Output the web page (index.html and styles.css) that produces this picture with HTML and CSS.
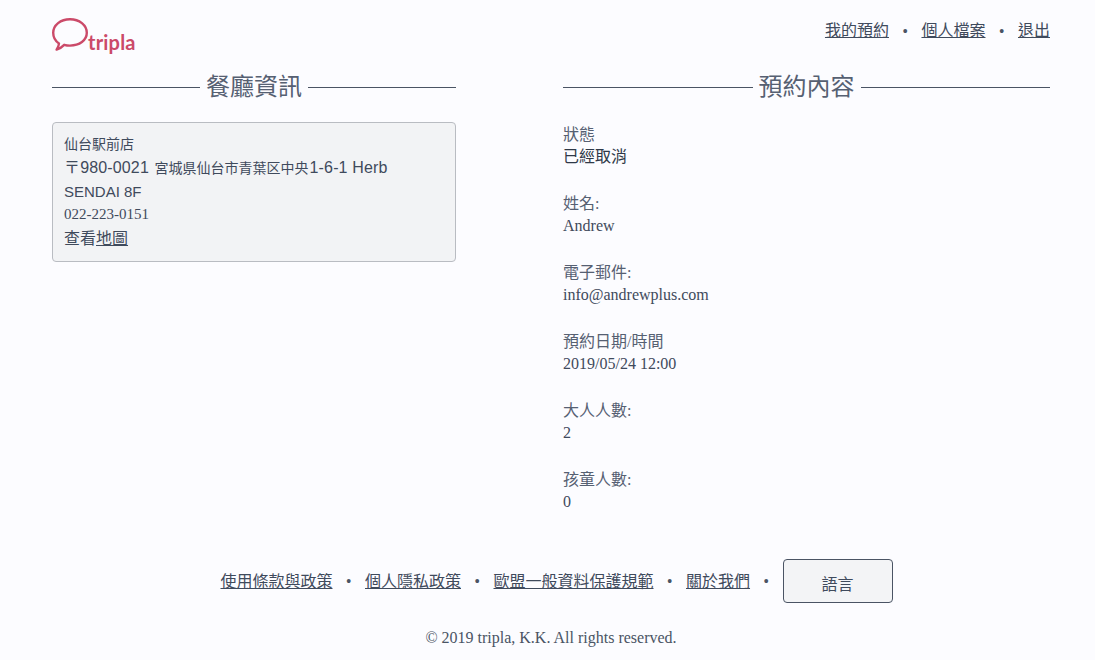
FILE: index.html
```html
<!DOCTYPE html>
<html lang="zh-Hant">
<head>
<meta charset="utf-8">
<title>tripla</title>
<link rel="stylesheet" href="styles.css">
</head>
<body>
<div class="page">
  <header class="header">
    <a class="logo" href="#">
      <svg class="logo-bubble" width="36" height="33" viewBox="0 0 36 33" aria-hidden="true">
        <path d="M7 25.5 C3.2 23 1.2 19.2 1.2 14.8 C1.2 7.2 8.6 1.2 18 1.2 C27.4 1.2 34.8 7.2 34.8 14.8 C34.8 22.4 27.4 27.6 18 27.6 C16 27.6 14 27.3 12.2 26.8 C10.2 28.9 7.6 30.6 4.6 31.6 C6 29.6 6.8 27.6 7 25.5 Z" fill="none" stroke="#cb4a69" stroke-width="2.4" stroke-linejoin="round"/>
      </svg>
      <span class="logo-text">tripla</span>
    </a>
    <nav class="nav">
      <a href="#">我的預約</a><span class="dot">•</span><a href="#">個人檔案</a><span class="dot">•</span><a href="#">退出</a>
    </nav>
  </header>

  <main class="columns">
    <section>
      <h2 class="title">餐廳資訊</h2>
      <div class="card">
        <div class="shop">仙台駅前店</div>
        <div class="address">〒980-0021 <span class="cjk">宮城県仙台市青葉区中央</span>1-6-1 Herb <span class="building">SENDAI 8F</span></div>
        <div class="phone">022-223-0151</div>
        <div class="map">查看<a href="#">地圖</a></div>
      </div>
    </section>
    <section>
      <h2 class="title">預約內容</h2>
      <dl class="details">
        <div class="item"><dt>狀態</dt><dd class="status">已經取消</dd></div>
        <div class="item"><dt>姓名:</dt><dd>Andrew</dd></div>
        <div class="item"><dt>電子郵件:</dt><dd>info@andrewplus.com</dd></div>
        <div class="item"><dt>預約日期/時間</dt><dd>2019/05/24 12:00</dd></div>
        <div class="item"><dt>大人人數:</dt><dd>2</dd></div>
        <div class="item"><dt>孩童人數:</dt><dd>0</dd></div>
      </dl>
    </section>
  </main>

  <footer class="footer">
    <div class="footer-links">
      <a href="#">使用條款與政策</a><span class="dot">•</span><a href="#">個人隱私政策</a><span class="dot">•</span><a href="#">歐盟一般資料保護規範</a><span class="dot">•</span><a href="#">關於我們</a><span class="dot">•</span><button class="lang" type="button">語言</button>
    </div>
    <p class="copy">© 2019 tripla, K.K. All rights reserved.</p>
  </footer>
</div>
</body>
</html>
```

FILE: styles.css
```css
* { box-sizing: border-box; }
html, body { margin: 0; padding: 0; }
body {
  background: #fcfcff;
  color: #4a5464;
  font-family: "Liberation Serif", "Noto Sans CJK TC", serif;
  font-size: 16px;
  line-height: 23px;
}
a { color: #3f4a5c; text-decoration: underline; }
.page { padding: 0 45px 0 52px; height: 660px; overflow: hidden; }

.header { display: flex; justify-content: space-between; align-items: flex-start; height: 73px; padding-top: 18px; }
.logo { display: flex; align-items: flex-end; text-decoration: none; color: #cb4a69; }
.logo-bubble { display: block; }
.logo-text { font-family: "Lato", sans-serif; font-weight: 700; font-size: 20px; line-height: 22px; letter-spacing: 0.2px; position: relative; top: 2px; }
.nav { display: flex; align-items: center; margin-top: 1px; font-size: 16px; line-height: 24px; }
.dot { display: inline-block; width: 32.5px; text-align: center; font-family: "Liberation Sans", sans-serif; font-size: 14px; color: #4a5464; }

.columns { display: grid; grid-template-columns: 404px 487px; column-gap: 107px; }
.title {
  display: flex; align-items: center; gap: 6px;
  margin: 0; font-size: 24px; line-height: 28px; font-weight: 400; color: #566072;
}
.title::before, .title::after { content: ""; flex: 1; height: 1px; background: #4a5464; }

.card {
  margin-top: 21px; height: 140px; padding: 10px 11px;
  background: #f2f3f5; border: 1px solid #b9bcc2; border-radius: 4px;
  color: #3f4a5c;
}
.shop { font-size: 14px; line-height: 23px; }
.address { font-family: "Liberation Sans", "Noto Sans CJK JP", sans-serif; font-size: 16px; line-height: 23px; letter-spacing: 0.15px; }
.address .cjk { margin: 0 1px; font-size: 14px; letter-spacing: 0; }
.address .building { font-size: 15px; letter-spacing: 0; }
.phone { font-size: 15px; line-height: 23px; }
.map { font-size: 16px; line-height: 25px; }

.details { margin: 23px 0 0; }
.item { height: 69px; }
dt { font-size: 16px; line-height: 22px; color: #566072; }
dd { margin: -1px 0 0; font-size: 16px; line-height: 23px; color: #3f4a5c; }
dd.status { color: #2f3948; }

.footer { margin-top: 21px; }
.footer-links { display: flex; justify-content: center; align-items: center; padding-left: 11px; font-size: 16px; }
.lang {
  width: 110px; height: 44px; padding: 4px 0 0;
  background: #f3f4f6; border: 1px solid #4a5464; border-radius: 4px;
  color: #3f4a5c; font-family: inherit; font-size: 16px;
}
.copy { margin: 23px 0 0; text-align: center; font-size: 16px; line-height: 23px; }
```
